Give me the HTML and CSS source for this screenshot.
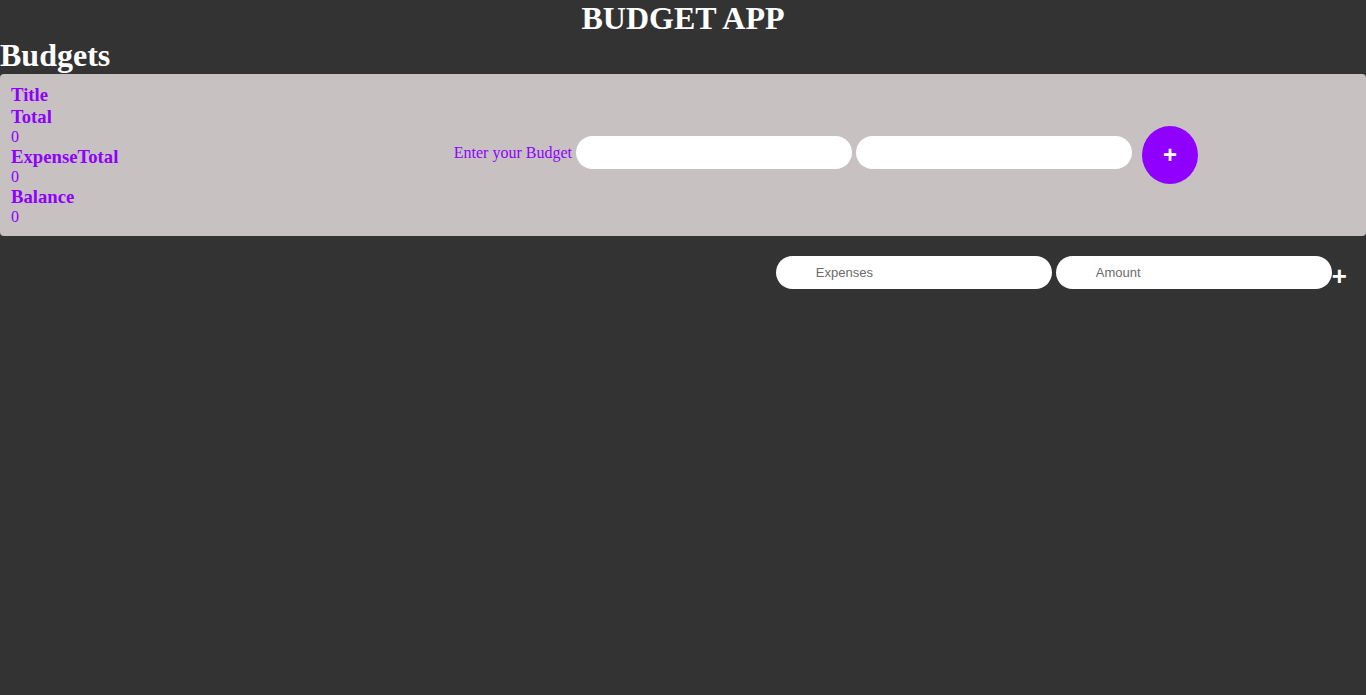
FILE: index.html
```html
<!DOCTYPE html>
<html>
<head>
<meta charset="utf-8">
<title>Budget App</title>
<link rel="stylesheet" href="styles.css">
</head>
<body>
<h1 class="app-title">BUDGET APP</h1>
<h1 class="section-title">Budgets</h1>
<div class="panel">
  <div class="summary">
    <div class="label">Title</div>
    <div class="label">Total</div>
    <div class="value">0</div>
    <div class="label">ExpenseTotal</div>
    <div class="value">0</div>
    <div class="label">Balance</div>
    <div class="value">0</div>
  </div>
  <div class="budget-form">
    <div class="budget-fields">
      <label class="budget-label">Enter your Budget</label>
      <input class="pill" type="text">
      <input class="pill" type="text">
    </div>
    <button class="add-btn">+</button>
  </div>
</div>
<div class="expense-row">
  <input class="pill" type="text" placeholder="Expenses">
  <input class="pill" type="text" placeholder="Amount">
  <span class="plus">+</span>
</div>
</body>
</html>
```
FILE: styles.css
```css
html, body {
  margin: 0;
  padding: 0;
  background: #333333;
  min-height: 100%;
}
body {
  font-family: "Liberation Serif", "Times New Roman", serif;
  color: #ffffff;
}
.app-title {
  margin: 0;
  font-size: 32px;
  text-align: center;
  line-height: 37px;
}
.section-title {
  margin: 0;
  font-size: 32px;
  line-height: 37px;
}
.panel {
  background: #c7c1c1;
  border-radius: 4px;
  display: flex;
  align-items: center;
  padding: 10px 10px 10px 11px;
}
.summary {
  color: #8f00ff;
  display: flex;
  flex-direction: column;
}
.summary .label {
  font-weight: bold;
  font-size: 18.72px;
  line-height: 22px;
}
.summary .value {
  font-size: 16px;
  line-height: 18px;
}
.budget-form {
  margin-left: auto;
  margin-right: 158px;
  display: flex;
  align-items: center;
}
.budget-fields {
  display: flex;
  align-items: center;
  gap: 4px;
  margin-bottom: 5px;
}
.budget-label {
  color: #8f00ff;
  font-size: 16px;
}
.pill {
  box-sizing: border-box;
  width: 276px;
  height: 33px;
  border: none;
  border-radius: 17px;
  background: #ffffff;
  padding: 0 40px;
  font-family: "Liberation Sans", Arial, sans-serif;
  font-size: 13px;
  color: #333;
  outline: none;
}
.pill::placeholder {
  color: #6b6b6b;
}
.add-btn {
  margin-left: 10px;
  width: 56px;
  height: 58px;
  border-radius: 50%;
  border: none;
  background: #8f00ff;
  color: #ffffff;
  font-family: "Liberation Sans", Arial, sans-serif;
  font-weight: bold;
  font-size: 24px;
  padding: 0;
  line-height: 1;
}
.expense-row {
  display: flex;
  justify-content: flex-end;
  align-items: center;
  gap: 4px;
  margin: 19px 19px 0 0;
}
.plus {
  margin-left: -4px;
  font-family: "Liberation Sans", Arial, sans-serif;
  font-weight: bold;
  font-size: 26px;
  color: #ffffff;
  line-height: 1;
  margin-top: 8px;
}
```
